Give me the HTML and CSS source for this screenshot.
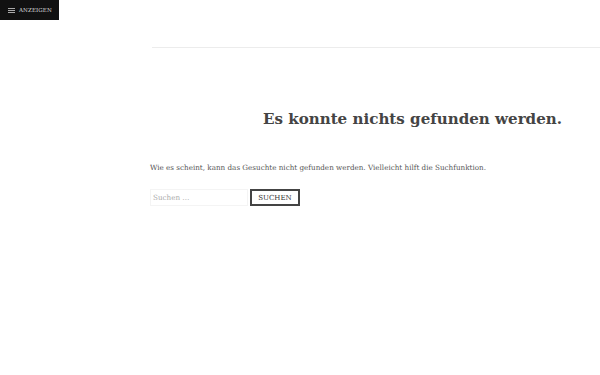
FILE: index.html
```html
<!DOCTYPE html>
<html lang="de">
<head>
<meta charset="utf-8">
<link rel="stylesheet" href="styles.css">
</head>
<body>
<header class="topbar">
  <button class="toggle"><span class="burger"><i></i><i></i><i></i></span>Anzeigen</button>
</header>
<main class="content">
  <hr class="rule">
  <h1 class="title">Es konnte nichts gefunden werden.</h1>
  <p class="lead">Wie es scheint, kann das Gesuchte nicht gefunden werden. Vielleicht hilft die Suchfunktion.</p>
  <form class="search">
    <input class="field" type="search" placeholder="Suchen …">
    <button class="submit" type="button">Suchen</button>
  </form>
</main>
</body>
</html>
```
FILE: styles.css
```css
* { box-sizing: border-box; }
html, body { margin: 0; padding: 0; background: #fff; }
body { font-family: "DejaVu Serif", "Liberation Serif", serif; color: #444; }
.topbar { height: 20px; }
.toggle {
  display: flex; align-items: center; gap: 4px;
  height: 20px; width: 59px; padding: 0 0 0 8px;
  background: #111; color: #ddd; border: 0;
  font-family: "DejaVu Serif", serif; font-size: 5.5px; text-transform: uppercase;
  letter-spacing: 0.1px;
}
.burger { display: flex; flex-direction: column; gap: 1px; width: 7px; }
.burger i { display: block; height: 1px; background: #aaa; }
.content { padding: 0 0 0 150px; }
.rule { margin: 27px 0 0 2px; border: 0; border-top: 1px solid #ececec; }
.title {
  margin: 62px 0 0; padding-right: 38px; text-align: right; font-size: 15.1px; font-weight: bold; color: #444;
}
.lead { margin: 35px 0 0; font-size: 7.2px; color: #555; }
.search { display: flex; gap: 2px; margin-top: 17px; }
.field {
  width: 98px; height: 17px; border: 1px solid #f4f4f4; padding: 0 2px;
  font-family: "DejaVu Serif", serif; font-size: 7.2px; color: #999;
}
.field::placeholder { color: #aaa; }
.submit {
  width: 50px; height: 17px; border: 2px solid #444; background: #fff; color: #333;
  font-family: "DejaVu Serif", serif; font-size: 7px; text-transform: uppercase; padding: 0;
}
```
